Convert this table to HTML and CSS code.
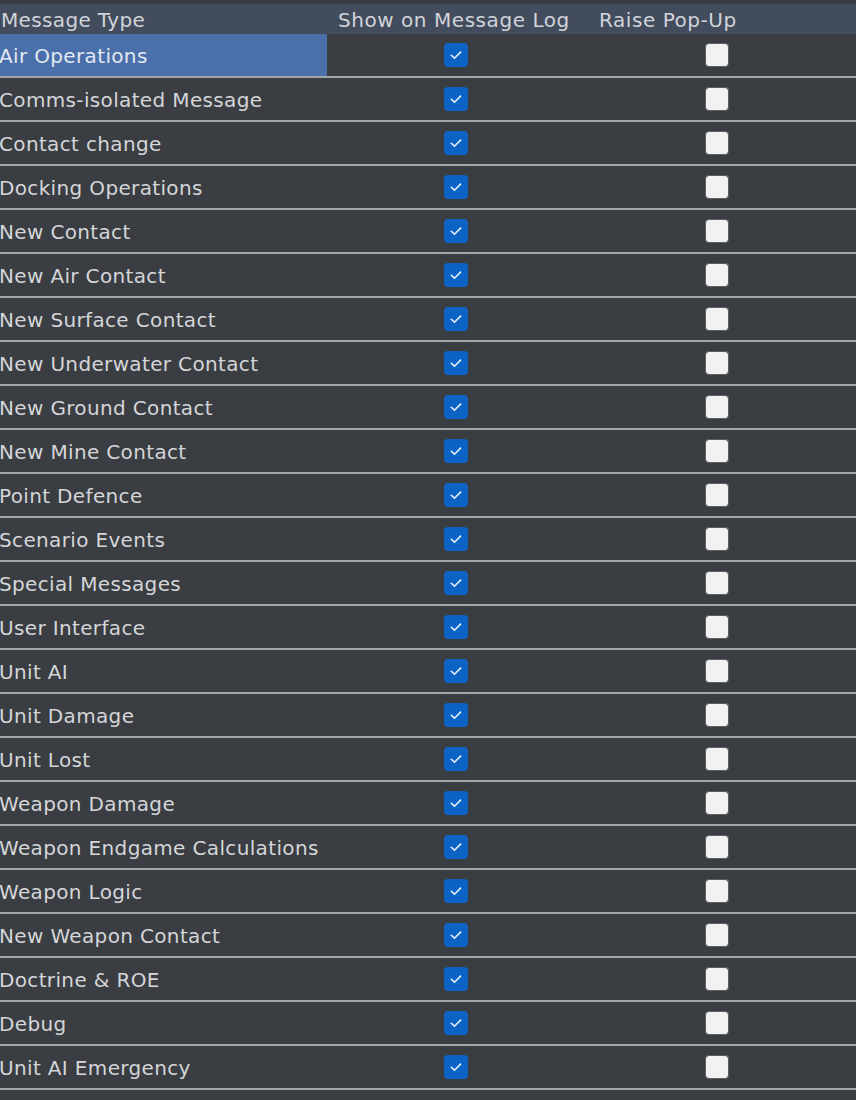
FILE: index.html
```html
<!DOCTYPE html>
<html>
<head>
<meta charset="utf-8">
<link rel="stylesheet" href="styles.css">
</head>
<body>
<div class="table">
  <div class="row header">
    <div class="cell name">Message Type</div>
    <div class="cell head">Show on Message Log</div>
    <div class="cell head head3">Raise Pop-Up</div>
    <div class="cell"></div>
  </div>
  <div id="rows"></div>
</div>
<template id="tpl">
  <div class="row item">
    <div class="cell name"></div>
    <div class="cell box"><span class="check on"><svg viewBox="0 0 24 24" width="24" height="24"><path d="M7.5 12.5 L10.5 15.2 L16.5 9.2" fill="none" stroke="#e3edfb" stroke-width="1.6" stroke-linecap="square"/></svg></span></div>
    <div class="cell box"><span class="check off"></span></div>
    <div class="cell"></div>
  </div>
</template>
<script>
var names = ["Air Operations","Comms-isolated Message","Contact change","Docking Operations","New Contact","New Air Contact","New Surface Contact","New Underwater Contact","New Ground Contact","New Mine Contact","Point Defence","Scenario Events","Special Messages","User Interface","Unit AI","Unit Damage","Unit Lost","Weapon Damage","Weapon Endgame Calculations","Weapon Logic","New Weapon Contact","Doctrine & ROE","Debug","Unit AI Emergency"];
var tpl = document.getElementById('tpl');
var host = document.getElementById('rows');
names.forEach(function(n, i){
  var r = tpl.content.firstElementChild.cloneNode(true);
  r.querySelector('.name').textContent = n;
  if (i === 0) r.querySelector('.name').classList.add('selected');
  host.appendChild(r);
});
</script>
</body>
</html>
```
FILE: styles.css
```css
html, body {
  margin: 0;
  padding: 0;
  background: #3a3d41;
}
body {
  width: 856px;
  height: 1100px;
  overflow: hidden;
  font-family: "DejaVu Sans", sans-serif;
  font-size: 20px;
  color: #d4d6d9;
}
.table {
  padding-top: 4px;
}
.row {
  display: grid;
  grid-template-columns: 327px 258px 262px 1fr;
}
.header {
  height: 30px;
  background: #434c5c;
  align-items: center;
  color: #d0d4da;
}
.item {
  height: 42px;
  border-bottom: 2px solid #a3a4a6;
  align-items: stretch;
}
.cell {
  display: flex;
  align-items: center;
  white-space: nowrap;
  overflow: hidden;
}
.name {
  padding-left: 0;
  text-indent: -1px;
  letter-spacing: 0.35px;
  padding-top: 2px;
}
.header .name {
  padding-left: 2px;
  padding-top: 1px;
}
.head {
  padding-left: 11px;
  letter-spacing: 0.55px;
  padding-top: 1px;
}
.head3 {
  padding-left: 14px;
}
.selected {
  background: #4a6fab;
  color: #e2e8f1;
}
.box {
  justify-content: center;
}
.check {
  display: block;
  width: 24px;
  height: 24px;
  box-sizing: border-box;
  border-radius: 4px;
  margin-top: -1px;
}
.check svg {
  display: block;
}
.check.on {
  background: #0b63c6;
}
.check.off {
  background: #f2f2f2;
  border: 1px solid #5c5e61;
  margin-left: 1px;
}
```
